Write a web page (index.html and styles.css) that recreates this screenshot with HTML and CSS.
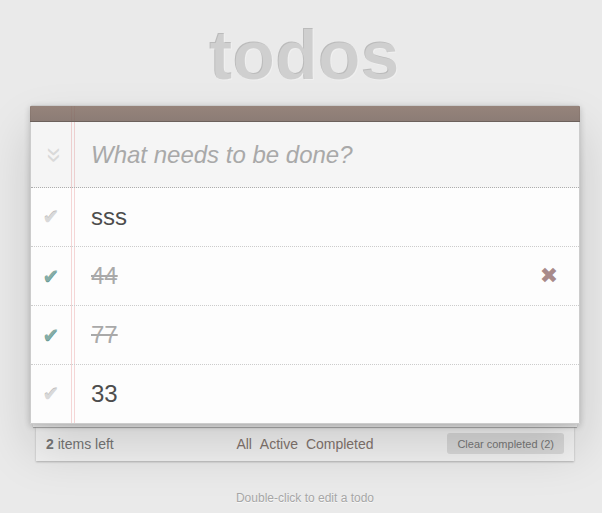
FILE: index.html
```html
<!DOCTYPE html>
<html lang="en">
<head>
<meta charset="utf-8">
<title>Todos</title>
<link rel="stylesheet" href="styles.css">
</head>
<body>
<div class="page">
  <h1 class="title">todos</h1>
  <section class="app">
    <header class="app-header">
      <div class="header-bar"></div>
      <div class="new-row">
        <span class="toggle-all">»</span>
        <div class="new-todo">What needs to be done?</div>
      </div>
    </header>
    <ul class="todo-list">
      <li class="todo">
        <span class="toggle">✔</span>
        <span class="label">sss</span>
        <span class="destroy"></span>
      </li>
      <li class="todo completed">
        <span class="toggle">✔</span>
        <span class="label">44</span>
        <span class="destroy">✖</span>
      </li>
      <li class="todo completed">
        <span class="toggle">✔</span>
        <span class="label">77</span>
        <span class="destroy"></span>
      </li>
      <li class="todo">
        <span class="toggle">✔</span>
        <span class="label">33</span>
        <span class="destroy"></span>
      </li>
    </ul>
  </section>
  <div class="stack"></div>
  <footer class="footer">
    <span class="count"><strong>2</strong> items left</span>
    <span class="filters"><a class="filter">All</a> <a class="filter">Active</a> <a class="filter">Completed</a></span>
    <span class="clear">Clear completed (2)</span>
  </footer>
  <p class="info">Double-click to edit a todo</p>
</div>
</body>
</html>
```
FILE: styles.css
```css
html, body {
  margin: 0;
  padding: 0;
}
body {
  background: #eaeaea;
  font: 14px "Liberation Sans", Arial, sans-serif;
  line-height: 1.4em;
  color: #4d4d4d;
}
.page {
  width: 550px;
  margin-left: 30px;
}
.title {
  margin: 0;
  padding-top: 21px;
  font-size: 70px;
  line-height: 70px;
  font-weight: bold;
  text-align: center;
  color: rgba(255, 255, 255, 0.3);
  text-shadow: -1px -1px rgba(0, 0, 0, 0.2);
}
.app {
  position: relative;
  z-index: 2;
  margin-top: 14px;
  background: rgba(255, 255, 255, 0.9);
  border: 1px solid #ccc;
  border-top-left-radius: 2px;
  border-top-right-radius: 2px;
  box-shadow: 0 2px 6px 0 rgba(0, 0, 0, 0.2), 0 25px 50px 0 rgba(0, 0, 0, 0.15);
  background-image: linear-gradient(to right, transparent 40px, #f5d6d6 40px, #f5d6d6 41px, transparent 41px, transparent 43px, #f5d6d6 43px, #f5d6d6 44px, transparent 44px);
}
.header-bar {
  height: 15px;
  margin: 0 -1px;
  border-bottom: 1px solid #6c615c;
  background: linear-gradient(to bottom, rgba(132, 110, 100, 0.85), rgba(120, 102, 94, 0.85));
  border-top-left-radius: 1px;
  border-top-right-radius: 1px;
}
.new-row {
  display: flex;
  align-items: center;
  background: rgba(0, 0, 0, 0.03);
  border-bottom: 1px dotted #adadad;
}
.toggle-all {
  width: 48px;
  text-align: center;
  font-size: 28px;
  line-height: 28px;
  color: #d9d9d9;
  transform: rotate(90deg);
}
.new-todo {
  flex: 1;
  padding: 16px 16px 16px 12px;
  font-size: 24px;
  line-height: 33px;
  font-style: italic;
  color: #a9a9a9;
}
.todo-list {
  margin: 0;
  padding: 0;
  list-style: none;
}
.todo {
  display: flex;
  align-items: center;
  font-size: 24px;
  border-bottom: 1px dotted #ccc;
}
.todo:last-child {
  border-bottom: none;
}
.toggle {
  width: 40px;
  text-align: center;
  font-family: "DejaVu Sans", sans-serif;
  font-size: 20px;
  line-height: 43px;
  color: #d9d9d9;
  text-shadow: 0 -1px 0 #bfbfbf;
}
.completed .toggle {
  color: #85ada7;
  text-shadow: 0 1px 0 #669991;
}
.label {
  flex: 1;
  padding: 15px 15px 15px 20px;
  line-height: 28px;
  white-space: pre;
}
.completed .label {
  color: #a9a9a9;
  text-decoration: line-through;
}
.destroy {
  width: 40px;
  margin-right: 10px;
  text-align: center;
  font-family: "DejaVu Sans", sans-serif;
  font-size: 22px;
  color: #a88a8a;
}
.stack {
  position: relative;
  z-index: 1;
  height: 3px;
  margin: 0 3px;
  background: #f6f6f6;
  box-shadow: 0 1px 1px rgba(0, 0, 0, 0.3);
}
.footer {
  display: grid;
  grid-template-columns: 1fr auto 1fr;
  align-items: center;
  margin: 0 6px;
  padding: 7px 10px;
  height: 20px;
  line-height: 20px;
  background: #f2f2f2;
  color: #777;
  box-shadow: 0 1px 2px rgba(0, 0, 0, 0.25);
}
.count {
  justify-self: start;
}
.filters {
  text-align: center;
}
.filter {
  color: #83756f;
  margin: 2px;
  text-decoration: none;
}
.clear {
  justify-self: end;
  font-size: 11px;
  line-height: 20px;
  padding: 0 10px;
  border-radius: 3px;
  background: rgba(0, 0, 0, 0.1);
  box-shadow: 0 -1px 0 0 rgba(0, 0, 0, 0.1);
  color: #777;
}
.info {
  margin: 29px 0 0;
  text-align: center;
  font-size: 12px;
  line-height: 17px;
  color: #a6a6a6;
  text-shadow: 0 1px 0 rgba(255, 255, 255, 0.7);
}
```
